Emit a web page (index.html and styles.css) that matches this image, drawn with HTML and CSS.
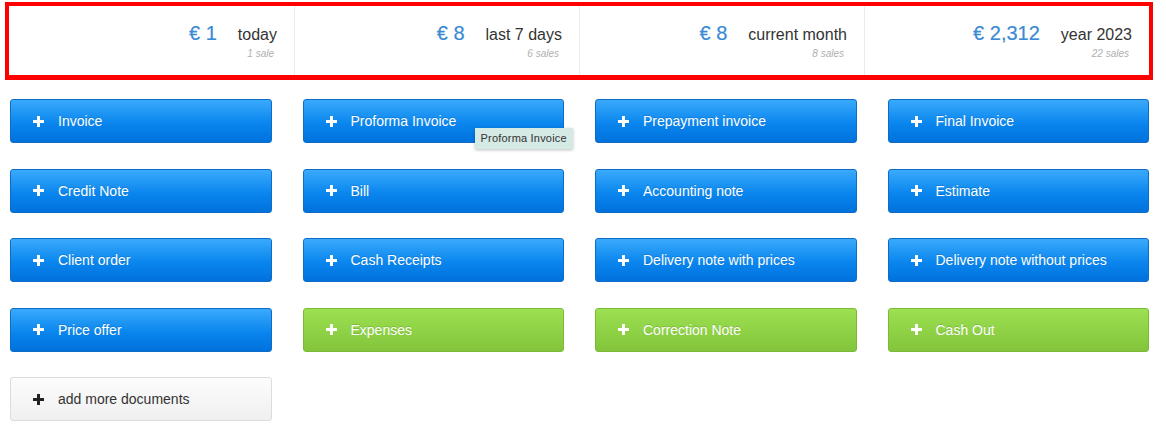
FILE: index.html
```html
<!DOCTYPE html>
<html lang="en">
<head>
  <meta charset="UTF-8">
  <title>Dashboard</title>
  <link rel="stylesheet" href="styles.css">
</head>
<body>
<div class="stats">
  <div class="stat">
    <div class="stat-main"><span class="amount">€ 1</span><span class="period">today</span></div>
    <div class="sales">1 sale</div>
  </div>
  <div class="stat">
    <div class="stat-main"><span class="amount">€ 8</span><span class="period">last 7 days</span></div>
    <div class="sales">6 sales</div>
  </div>
  <div class="stat">
    <div class="stat-main"><span class="amount">€ 8</span><span class="period">current month</span></div>
    <div class="sales">8 sales</div>
  </div>
  <div class="stat">
    <div class="stat-main"><span class="amount">€ 2,312</span><span class="period">year 2023</span></div>
    <div class="sales">22 sales</div>
  </div>
</div>

<div class="docs">
  <a class="btn blue"><svg class="plus" viewBox="0 0 11 11"><rect x="4" y="0" width="3" height="11"/><rect x="0" y="4" width="11" height="3"/></svg>Invoice</a>
  <a class="btn blue has-tip"><svg class="plus" viewBox="0 0 11 11"><rect x="4" y="0" width="3" height="11"/><rect x="0" y="4" width="11" height="3"/></svg>Proforma Invoice<span class="tip">Proforma Invoice</span></a>
  <a class="btn blue"><svg class="plus" viewBox="0 0 11 11"><rect x="4" y="0" width="3" height="11"/><rect x="0" y="4" width="11" height="3"/></svg>Prepayment invoice</a>
  <a class="btn blue"><svg class="plus" viewBox="0 0 11 11"><rect x="4" y="0" width="3" height="11"/><rect x="0" y="4" width="11" height="3"/></svg>Final Invoice</a>

  <a class="btn blue"><svg class="plus" viewBox="0 0 11 11"><rect x="4" y="0" width="3" height="11"/><rect x="0" y="4" width="11" height="3"/></svg>Credit Note</a>
  <a class="btn blue"><svg class="plus" viewBox="0 0 11 11"><rect x="4" y="0" width="3" height="11"/><rect x="0" y="4" width="11" height="3"/></svg>Bill</a>
  <a class="btn blue"><svg class="plus" viewBox="0 0 11 11"><rect x="4" y="0" width="3" height="11"/><rect x="0" y="4" width="11" height="3"/></svg>Accounting note</a>
  <a class="btn blue"><svg class="plus" viewBox="0 0 11 11"><rect x="4" y="0" width="3" height="11"/><rect x="0" y="4" width="11" height="3"/></svg>Estimate</a>

  <a class="btn blue"><svg class="plus" viewBox="0 0 11 11"><rect x="4" y="0" width="3" height="11"/><rect x="0" y="4" width="11" height="3"/></svg>Client order</a>
  <a class="btn blue"><svg class="plus" viewBox="0 0 11 11"><rect x="4" y="0" width="3" height="11"/><rect x="0" y="4" width="11" height="3"/></svg>Cash Receipts</a>
  <a class="btn blue"><svg class="plus" viewBox="0 0 11 11"><rect x="4" y="0" width="3" height="11"/><rect x="0" y="4" width="11" height="3"/></svg>Delivery note with prices</a>
  <a class="btn blue"><svg class="plus" viewBox="0 0 11 11"><rect x="4" y="0" width="3" height="11"/><rect x="0" y="4" width="11" height="3"/></svg>Delivery note without prices</a>

  <a class="btn blue"><svg class="plus" viewBox="0 0 11 11"><rect x="4" y="0" width="3" height="11"/><rect x="0" y="4" width="11" height="3"/></svg>Price offer</a>
  <a class="btn green"><svg class="plus" viewBox="0 0 11 11"><rect x="4" y="0" width="3" height="11"/><rect x="0" y="4" width="11" height="3"/></svg>Expenses</a>
  <a class="btn green"><svg class="plus" viewBox="0 0 11 11"><rect x="4" y="0" width="3" height="11"/><rect x="0" y="4" width="11" height="3"/></svg>Correction Note</a>
  <a class="btn green"><svg class="plus" viewBox="0 0 11 11"><rect x="4" y="0" width="3" height="11"/><rect x="0" y="4" width="11" height="3"/></svg>Cash Out</a>

  <a class="btn gray"><svg class="plus" viewBox="0 0 11 11"><rect x="4" y="0" width="3" height="11"/><rect x="0" y="4" width="11" height="3"/></svg>add more documents</a>
</div>
</body>
</html>
```

FILE: styles.css
```css
body {
  margin: 0;
  font-family: "Liberation Sans", Arial, sans-serif;
  background: #fff;
  color: #333;
}

/* stats */
.stats {
  display: grid;
  grid-template-columns: repeat(4, 1fr);
  margin: 2px 13px 0 5px;
  height: 69px;
  border: 4px solid #f00;
  border-bottom-width: 5px;
}

.stat {
  border-left: 1px solid #ebebeb;
  padding: 16px 17px 0 0;
  text-align: right;
}

.stat:first-child {
  border-left: 0;
}

.stat-main {
  display: flex;
  justify-content: flex-end;
  align-items: baseline;
  gap: 21px;
  height: 24px;
}

.amount {
  font-size: 20px;
  color: #3a8ad5;
  -webkit-text-stroke: .2px #3a8ad5;
}

.period {
  font-size: 16px;
  color: #333;
}

.sales {
  margin-top: 2px;
  padding-right: 3px;
  font-size: 10px;
  font-style: italic;
  color: #b0b0b0;
}

/* buttons */
.docs {
  display: grid;
  grid-template-columns: repeat(4, 261.5px);
  grid-auto-rows: 44px;
  column-gap: 31px;
  row-gap: 25.5px;
  padding: 19px 0 0 10px;
}

.btn {
  position: relative;
  display: flex;
  align-items: center;
  padding-left: 22px;
  border-radius: 3px;
  font-size: 14px;
  color: #fff;
  text-shadow: 0 -1px 0 rgba(0, 0, 0, .15);
  cursor: pointer;
}

.plus {
  width: 11px;
  height: 11px;
  margin-right: 14px;
  fill: #fff;
}

.blue {
  background: linear-gradient(#3aaafc, #0a86ee 55%, #0071dc);
  border: 1px solid #0e6cc4;
}

.green {
  background: linear-gradient(#9ce152, #8ed145 55%, #82c43b);
  border: 1px solid #7cbb3a;
}

.gray {
  background: linear-gradient(#fcfcfc, #f0f0f0);
  border: 1px solid #dcdcdc;
  color: #333;
  text-shadow: none;
}

.gray .plus {
  fill: #222;
}

.tip {
  position: absolute;
  left: 171px;
  top: 28px;
  padding: 4px 6px 5px;
  background: #d5e9e5;
  color: #333;
  font-size: 11px;
  letter-spacing: .2px;
  text-shadow: none;
  white-space: nowrap;
  box-shadow: 0 1px 3px rgba(0, 0, 0, .25);
}
```
